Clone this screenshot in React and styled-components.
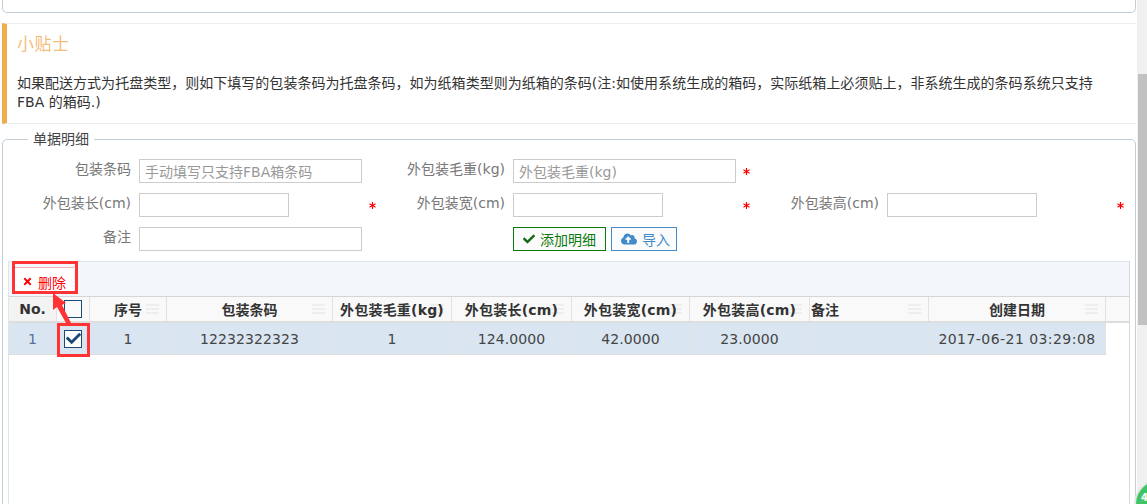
import React from 'react';
import styled, { createGlobalStyle } from 'styled-components';
import { FaCheck, FaCloudUploadAlt, FaTimes, FaAsterisk } from 'react-icons/fa';

const Global = createGlobalStyle`
  html, body { margin: 0; padding: 0; height: 504px; overflow: hidden; background: #fff; }
  body { font: 14px "DejaVu Sans", "Noto Sans CJK SC", sans-serif; color: #333; }
  * { box-sizing: border-box; }
`;

const Page = styled.div`
  position: relative;
  display: flex;
  width: 1147px;
  height: 504px;
  overflow: hidden;
`;
const Main = styled.main`
  width: 1137px;
  padding-left: 2px;
  flex: none;
`;
const ScrollTrack = styled.div`
  width: 10px;
  flex: none;
  background: #f0f0f0;
  padding-top: 74px;
`;
const ScrollThumb = styled.div`
  height: 251px;
  margin-left: 1px;
  background: #c1c1c1;
`;
const TopBox = styled.div`
  width: 1134px;
  height: 13px;
  border: 1px solid #c3ced6;
  border-top: 0;
  border-radius: 0 0 5px 5px;
  margin-bottom: 10px;
`;
const Tip = styled.section`
  width: 1134px;
  height: 101px;
  border-left: 5px solid #f0ad4e;
  border-top: 1px solid #eee;
  border-bottom: 1px solid #eee;
  padding: 10px 0 0 10px;
`;
const TipTitle = styled.h4`
  margin: 0 0 20px;
  font-size: 17px;
  line-height: 20px;
  font-weight: 400;
  color: #f5bd7c;
  letter-spacing: 0.5px;
`;
const TipText = styled.p`
  margin: 0;
  width: 1085px;
  font-size: 14px;
  line-height: 19px;
  color: #333;
  letter-spacing: 0.02px;
`;
const Detail = styled.fieldset`
  width: 1134px;
  height: 400px;
  margin: 5px 0 0;
  padding: 10px 5px 0 5px;
  min-width: 0;
  border: 1px solid #c3ced6;
  border-radius: 5px 5px 0 0;
`;
const DetailLegend = styled.legend`
  margin-left: 20px;
  padding: 0 5px;
  line-height: 20px;
  font-size: 14px;
  color: #444;
`;
const FormGrid = styled.div`
  display: grid;
  grid-template-columns: repeat(3, 374px);
  grid-auto-rows: 34px;
  margin-left: 1px;
`;
const Field = styled.div`
  display: flex;
  align-items: flex-start;
  grid-column: ${(p) => p.$col};
  grid-row: ${(p) => p.$row};
`;
const Label = styled.label`
  width: 122px;
  flex: none;
  text-align: right;
  line-height: 20px;
  color: #777;
  margin-right: 8px;
`;
const Input = styled.input`
  width: ${(p) => p.$w}px;
  height: 24px;
  flex: none;
  border: 1px solid #ccc;
  padding: 2px 5px 0;
  font: inherit;
  outline: none;
  background: #fff;
  &::placeholder { color: #999; opacity: 1; }
`;
const Star = styled.span`
  color: #f00;
  font-size: 7px;
  margin-left: ${(p) => p.$gap}px;
  display: flex;
  align-items: center;
  height: 24px;
`;
const ButtonCell = styled.div`
  grid-column: 2;
  grid-row: 3;
  padding-left: 130px;
  display: flex;
  gap: 5px;
  align-items: flex-start;
`;
const Btn = styled.button`
  height: 24px;
  display: inline-flex;
  align-items: center;
  gap: 5px;
  padding: 0 ${(p) => p.$pr}px 0 9px;
  font: inherit;
  font-size: 14px;
  background: #fbfbfb;
  border: 1px solid ${(p) => p.$c};
  color: ${(p) => p.$c};
`;
const TableWrap = styled.div`
  width: 1122px;
  height: 300px;
  border: 1px solid #e0e5ea;
  border-bottom: 0;
  border-right-color: #d9d9d9;
`;
const Toolbar = styled.div`
  height: 35px;
  background: #f3f7fb;
  padding: 5px 0 0 5px;
  border-bottom: 1px solid #d5d5d5;
`;
const DeleteBtn = styled.button`
  width: 60px;
  height: 25px;
  display: flex;
  align-items: center;
  gap: 5px;
  padding: 3px 0 0 8px;
  font: inherit;
  font-size: 14px;
  color: #f00;
  background: #fff;
  border: 0;
  border-top: 1px solid #f5b5b5;
`;
const HeadRow = styled.div`
  display: flex;
  height: 26px;
  background: #f9f9f9;
  border-bottom: 2px solid #ddd;
`;
const DataRow = styled.div`
  display: flex;
  width: 1097px;
  height: 32px;
  background: #d9e6f1;
  border-bottom: 1px solid #ddd;
`;
const Cell = styled.div`
  position: relative;
  width: ${(p) => p.$w}px;
  flex: none;
  display: flex;
  align-items: center;
  justify-content: ${(p) => (p.$left ? 'flex-start' : 'center')};
  padding-left: ${(p) => (p.$left ? '1px' : '0')};
  border-right: 1px solid #e2e2e2;
  white-space: nowrap;
  color: ${(p) => p.$c || '#444'};
  font-weight: ${(p) => (p.$head ? 700 : 400)};
  background: ${(p) => p.$bg || 'transparent'};
  font-size: 14px;
  letter-spacing: ${(p) => p.$ls || '0'};
`;
const CellText = styled.span`
  position: relative;
  z-index: 1;
`;
const Grip = styled.i`
  position: absolute;
  right: 7px;
  top: 7px;
  width: 13px;
  height: 11px;
  background: repeating-linear-gradient(#eee 0 2px, transparent 2px 4px);
`;
const Check = styled.span`
  width: 18px;
  height: 18px;
  border: 1.5px solid #1d4a75;
  background: ${(p) => (p.$on ? '#fff' : '#fafafa')};
  display: flex;
  align-items: center;
  justify-content: center;
  color: #1d4a75;
  font-size: 15px;
`;
const Overlay = styled.svg`
  position: absolute;
  left: 0;
  top: 0;
  pointer-events: none;
`;
const Badge = styled.div`
  position: absolute;
  left: 1134px;
  top: 479px;
  width: 50px;
  height: 50px;
  border-radius: 50%;
  background: #3fc566;
  border: 2px solid #e6e6e6;
  color: #fff;
  font-weight: 700;
  font-size: 10px;
  line-height: 10px;
  padding: 12px 0 0 5px;
`;

const cols = [
  { t: 'No.', w: 48, c: '#566f9a', v: '1', bg: '#f3f3f3' },
  { t: null, w: 33, v: null },
  { t: '序号', w: 77, v: '1', grip: true },
  { t: '包装条码', w: 166, v: '12232322323', ls: '0.1px', grip: true },
  { t: '外包装毛重(kg)', w: 119, v: '1', hls: '0.2px', grip: true },
  { t: '外包装长(cm)', w: 120, v: '124.0000', ls: '0.1px', hls: '0.2px', grip: true },
  { t: '外包装宽(cm)', w: 118, v: '42.0000', ls: '0.1px', hls: '0.2px', grip: true },
  { t: '外包装高(cm)', w: 120, v: '23.0000', ls: '0.1px', hls: '0.2px', grip: true },
  { t: '备注', w: 119, v: '', left: true, grip: true },
  { t: '创建日期', w: 177, v: '2017-06-21 03:29:08', ls: '0.45px', grip: true },
];

export default function App() {
  return (
    <Page>
      <Global />
      <Main>
        <TopBox />
        <Tip>
          <TipTitle>小贴士</TipTitle>
          <TipText>
            如果配送方式为托盘类型，则如下填写的包装条码为托盘条码，如为纸箱类型则为纸箱的条码(注:如使用系统生成的箱码，实际纸箱上必须贴上，非系统生成的条码系统只支持 FBA 的箱码.)
          </TipText>
        </Tip>
        <Detail>
          <DetailLegend>单据明细</DetailLegend>
          <FormGrid>
            <Field $col={1} $row={1}>
              <Label>包装条码</Label>
              <Input $w={223} placeholder="手动填写只支持FBA箱条码" />
            </Field>
            <Field $col={2} $row={1}>
              <Label>外包装毛重(kg)</Label>
              <Input $w={223} placeholder="外包装毛重(kg)" />
              <Star $gap={7}><FaAsterisk /></Star>
            </Field>
            <Field $col={1} $row={2}>
              <Label>外包装长(cm)</Label>
              <Input $w={150} />
              <Star $gap={80}><FaAsterisk /></Star>
            </Field>
            <Field $col={2} $row={2}>
              <Label>外包装宽(cm)</Label>
              <Input $w={150} />
              <Star $gap={80}><FaAsterisk /></Star>
            </Field>
            <Field $col={3} $row={2}>
              <Label>外包装高(cm)</Label>
              <Input $w={150} />
              <Star $gap={80}><FaAsterisk /></Star>
            </Field>
            <Field $col={1} $row={3}>
              <Label>备注</Label>
              <Input $w={223} />
            </Field>
            <ButtonCell>
              <Btn $c="#0a7a0a" $pr={9}><FaCheck size={12} color="#136b13" />添加明细</Btn>
              <Btn $c="#428bca" $pr={6}><FaCloudUploadAlt size={16} />导入</Btn>
            </ButtonCell>
          </FormGrid>
          <TableWrap>
            <Toolbar>
              <DeleteBtn><FaTimes size={11} />删除</DeleteBtn>
            </Toolbar>
            <HeadRow>
              {cols.map((c, i) => (
                <Cell key={i} $w={c.w} $head $left={c.left} $c="#333" $bg={c.bg} $ls={c.hls}>
                  {c.t === null ? <Check /> : <CellText>{c.t}</CellText>}
                  {c.grip && <Grip />}
                </Cell>
              ))}
            </HeadRow>
            <DataRow>
              {cols.map((c, i) => (
                <Cell key={i} $w={c.w} $c={c.c} $ls={c.ls}>
                  {c.v === null ? <Check $on><FaCheck /></Check> : c.v}
                </Cell>
              ))}
            </DataRow>
          </TableWrap>
        </Detail>
      </Main>
      <ScrollTrack><ScrollThumb /></ScrollTrack>
      <Badge>4</Badge>
      <Overlay width="1147" height="504" viewBox="0 0 1147 504" fill="none">
        <rect x="13.5" y="262.5" width="63" height="30" stroke="#f33" strokeWidth="3" />
        <rect x="58.5" y="324.5" width="30" height="31" stroke="#f33" strokeWidth="3" />
        <path d="M53 293 L66 303 L62 305 L71 323 L66 323 L57 307 L53 310 Z" fill="#f33" />
      </Overlay>
    </Page>
  );
}
